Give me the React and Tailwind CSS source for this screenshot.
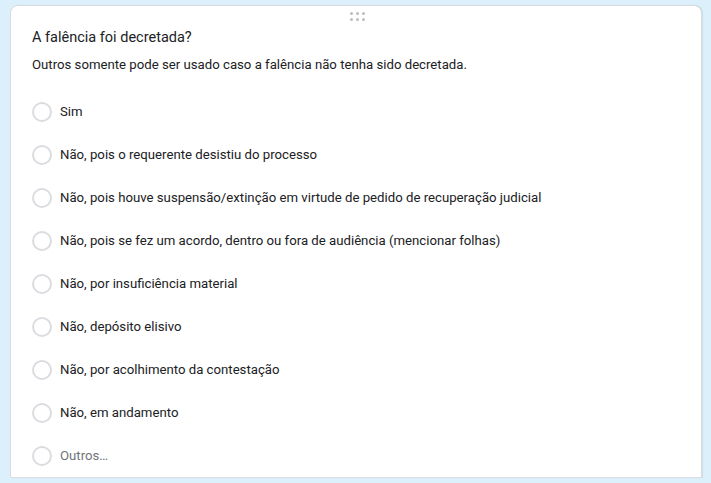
const options = [
  'Sim',
  'Não, pois o requerente desistiu do processo',
  'Não, pois houve suspensão/extinção em virtude de pedido de recuperação judicial',
  'Não, pois se fez um acordo, dentro ou fora de audiência (mencionar folhas)',
  'Não, por insuficiência material',
  'Não, depósito elisivo',
  'Não, por acolhimento da contestação',
  'Não, em andamento',
]

function Radio() {
  return <span className="h-[20px] w-[20px] shrink-0 rounded-full border-2 border-[#dadce0] bg-white" />
}

export default function App() {
  return (
    <div
      className="h-[483px] w-[711px] overflow-hidden bg-[#dcf0fc] pl-[10px] pt-[5px]"
      style={{ fontFamily: 'Roboto, "Liberation Sans", sans-serif' }}
    >
      <div className="h-[473px] w-[692px] rounded-t-lg border border-[#dadce0] bg-white shadow-[1px_0_1px_rgba(0,0,0,0.08)]">
        <div className="flex h-[15px] items-end justify-center">
          <div className="grid grid-cols-3 gap-x-[3px] gap-y-[3px] pl-[2px]">
            {Array.from({ length: 6 }).map((_, i) => (
              <span key={i} className="h-[3px] w-[3px] rounded-full bg-[#bdbdbd]" />
            ))}
          </div>
        </div>
        <div className="px-[21px]">
          <h2 className="mt-[5px] text-[14.5px] leading-[24px] text-[#202124]">A falência foi decretada?</h2>
          <p className="mt-[5px] text-[13.2px] leading-[20px] text-[#202124]">
            Outros somente pode ser usado caso a falência não tenha sido decretada.
          </p>
          <ul className="mt-[15px]">
            {options.map((o) => (
              <li key={o} className="flex h-[43px] items-center gap-[8px]">
                <Radio />
                <span className="text-[13.2px] text-[#202124]">{o}</span>
              </li>
            ))}
            <li className="flex h-[43px] items-center gap-[8px]">
              <Radio />
              <span className="text-[13.2px] text-[#70757a]">Outros…</span>
            </li>
          </ul>
        </div>
      </div>
    </div>
  )
}
